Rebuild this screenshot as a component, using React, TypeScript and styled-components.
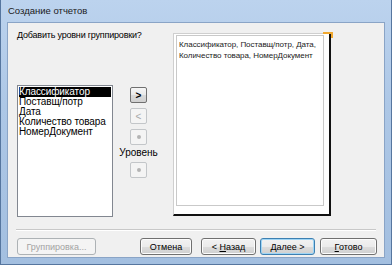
import React from "react";
import styled, { createGlobalStyle } from "styled-components";

const GlobalStyle = createGlobalStyle`
    html, body {
        margin: 0;
        padding: 0;
        background: #ffffff;
    }
    body {
        width: 392px;
        height: 265px;
        overflow: hidden;
        font-family: "Liberation Sans", Arial, sans-serif;
    }
`;

const fields = ["Классификатор", "Поставщ/потр", "Дата", "Количество товара", "НомерДокумент"];

const App: React.FC = () => {
    return (
        <>
            <GlobalStyle />
            <Window>
                <TitleBar>Создание отчетов</TitleBar>
                <Client>
                    <TopArea>
                        <LeftCol>
                            <Prompt>Добавить уровни группировки?</Prompt>
                            <FieldList>
                                {fields.map((f, i) => (
                                    <FieldItem key={f} selected={i === 0}>{f}</FieldItem>
                                ))}
                            </FieldList>
                        </LeftCol>
                        <ButtonCol>
                            <SmallButton>&gt;</SmallButton>
                            <SmallButton disabled>&lt;</SmallButton>
                            <SmallButton disabled><Dot /></SmallButton>
                            <LevelLabel>Уровень</LevelLabel>
                            <SmallButton disabled><Dot /></SmallButton>
                        </ButtonCol>
                        <PreviewPage>
                            <PageCorner />
                            <PreviewBox>
                                Классификатор, Поставщ/потр, Дата,
                                <br />
                                Количество товара, НомерДокумент
                            </PreviewBox>
                        </PreviewPage>
                    </TopArea>
                    <Separator />
                    <ButtonRow>
                        <WizardButton disabled width={79}>Группировка...</WizardButton>
                        <Spacer />
                        <WizardButton width={52}>Отмена</WizardButton>
                        <WizardButton width={55} gap={9}>&lt; <u>Н</u>азад</WizardButton>
                        <WizardButton width={55} gap={4} focused>
                            <u>Д</u>алее &gt;
                        </WizardButton>
                        <WizardButton width={57} gap={5}><u>Г</u>отово</WizardButton>
                    </ButtonRow>
                </Client>
            </Window>
        </>
    );
};

const Window = styled.div`
    width: 392px;
    height: 265px;
    box-sizing: border-box;
    display: flex;
    flex-direction: column;
    background: linear-gradient(180deg, #bcd3ee 0%, #adc7e6 40%, #a3bfe0 100%);
    border-left: 1px solid #56769f;
    border-right: 1px solid #56769f;
    border-bottom: 1px solid #56769f;
`;

const TitleBar = styled.div`
    height: 22px;
    line-height: 22px;
    padding-left: 7px;
    font-family: "Liberation Sans", Arial, sans-serif;
    font-size: 9.5px;
    color: #1a1a1a;
`;

const Client = styled.div`
    margin: 0 6px 6px 6px;
    height: 236px;
    background: #f0f0f0;
    border: 1px solid #8aa4c6;
    box-sizing: border-box;
    display: flex;
    flex-direction: column;
    font-size: 10px;
    color: #000;
`;

const TopArea = styled.div`
    display: flex;
    height: 206px;
`;

const LeftCol = styled.div`
    display: flex;
    flex-direction: column;
    padding-left: 9px;
    width: 96px;
`;

const Prompt = styled.div`
    margin-top: 6px;
    height: 13px;
    line-height: 13px;
    font-size: 9px;
    letter-spacing: -0.2px;
    white-space: nowrap;
`;

const FieldList = styled.div`
    margin-top: 43px;
    height: 132px;
    box-sizing: border-box;
    background: #ffffff;
    border: 1px solid #828790;
    padding: 1px;
`;

const FieldItem = styled.div<{ selected?: boolean }>`
    height: 10px;
    line-height: 10px;
    white-space: nowrap;
    letter-spacing: -0.1px;
    background: ${p => (p.selected ? "#000000" : "transparent")};
    color: ${p => (p.selected ? "#ffffff" : "#000000")};
`;

const ButtonCol = styled.div`
    display: flex;
    flex-direction: column;
    align-items: center;
    width: 33px;
    margin-left: 9px;
    padding-top: 64px;
    gap: 5px;
`;

const SmallButton = styled.button`
    width: 17px;
    height: 16px;
    padding: 0;
    display: flex;
    align-items: center;
    justify-content: center;
    font-family: "Liberation Sans", sans-serif;
    font-size: 10px;
    font-weight: bold;
    color: #000;
    border: 1px solid #707070;
    border-radius: 2px;
    background: linear-gradient(180deg, #f6f6f6 0%, #e9e9e9 50%, #dadada 51%, #d0d0d0 100%);

    &:disabled {
        color: #a8a8a8;
        font-weight: normal;
        border-color: #c3c6c9;
        background: #f4f4f4;
    }
`;

const Dot = styled.span`
    width: 4px;
    height: 4px;
    border-radius: 50%;
    background: #b4b4b4;
`;

const LevelLabel = styled.div`
    font-size: 10px;
    line-height: 10px;
    margin: -2px 0 -1px;
    white-space: nowrap;
`;

const PreviewPage = styled.div`
    position: relative;
    margin-left: 18px;
    margin-top: 10px;
    width: 158px;
    height: 183px;
    box-sizing: border-box;
    background: #ffffff;
    border-left: 1px solid #cfcfcf;
    border-top: 1px solid #cfcfcf;
    border-right: 2px solid #111;
    border-bottom: 2px solid #111;
    padding: 1px 5px 8px 2px;
    display: flex;
`;

const PageCorner = styled.div`
    position: absolute;
    top: -2px;
    right: -4px;
    width: 8px;
    height: 4px;
    border-top: 2px solid #f0a830;
    border-right: 2px solid #f0a830;
`;

const PreviewBox = styled.div`
    flex: 1;
    border: 1px solid #c9c9c9;
    padding: 3px 2px;
    font-size: 8px;
    letter-spacing: -0.05px;
    line-height: 11px;
    color: #222;
    white-space: nowrap;
    overflow: hidden;
`;

const Separator = styled.div`
    margin: 0 8px;
    height: 0;
    border-top: 1px solid #c8c8c8;
    border-bottom: 1px solid #ffffff;
`;

const ButtonRow = styled.div`
    display: flex;
    align-items: center;
    padding: 7px 7px 0 9px;
`;

const Spacer = styled.div`
    flex: 1;
`;

const WizardButton = styled.button<{ width: number; focused?: boolean; gap?: number }>`
    width: ${p => p.width}px;
    height: 17px;
    margin-left: ${p => p.gap ?? 0}px;
    padding: 0;
    font-family: "Liberation Sans", sans-serif;
    font-size: 9px;
    color: #000;
    border: 1px solid ${p => (p.focused ? "#3c7fb1" : "#707070")};
    border-radius: 3px;
    box-shadow: ${p => (p.focused ? "inset 0 0 0 1px #9fd5f5" : "inset 0 0 0 1px #fcfcfc")};
    background: linear-gradient(180deg, #f2f2f2 0%, #ebebeb 50%, #dddddd 51%, #cfcfcf 100%);

    &:disabled {
        color: #a3a3a3;
        border-color: #adb2b5;
        box-shadow: none;
        background: #f4f4f4;
    }

    u {
        text-decoration-thickness: 1px;
    }
`;

export default App;
